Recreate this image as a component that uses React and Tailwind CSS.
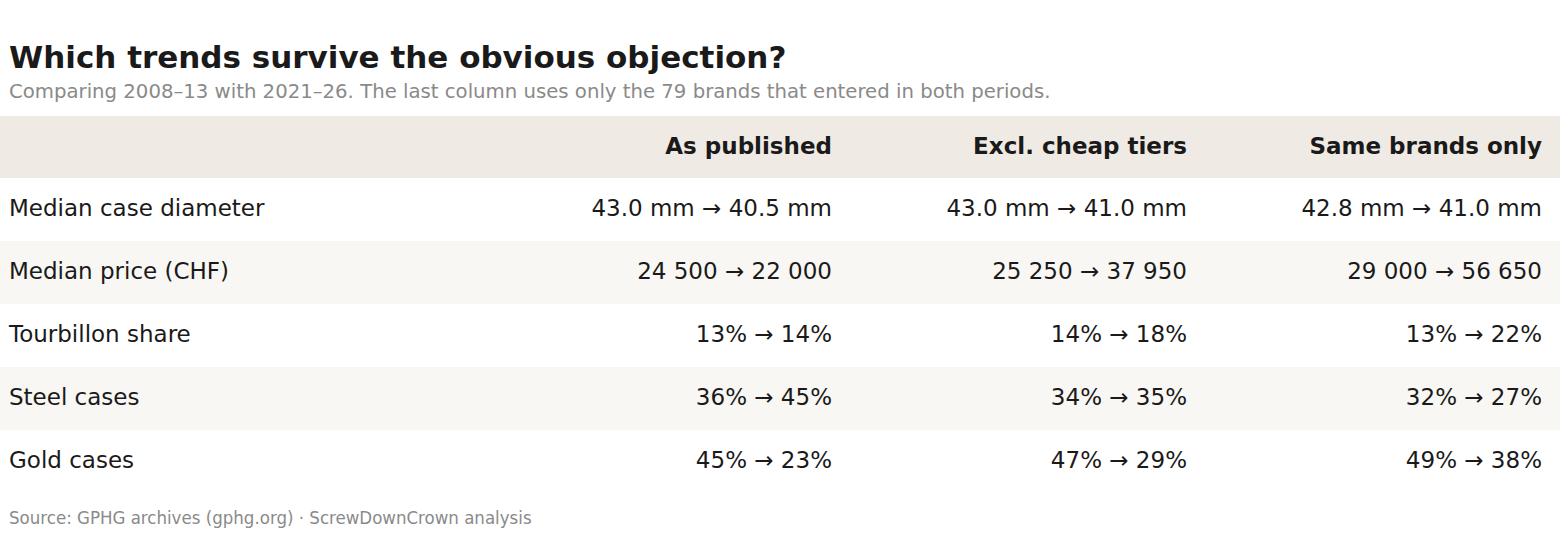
import React from 'react';

const rows = [
    { label: 'Median case diameter', a: '43.0 mm → 40.5 mm', b: '43.0 mm → 41.0 mm', c: '42.8 mm → 41.0 mm' },
    { label: 'Median price (CHF)', a: '24 500 → 22 000', b: '25 250 → 37 950', c: '29 000 → 56 650' },
    { label: 'Tourbillon share', a: '13% → 14%', b: '14% → 18%', c: '13% → 22%' },
    { label: 'Steel cases', a: '36% → 45%', b: '34% → 35%', c: '32% → 27%' },
    { label: 'Gold cases', a: '45% → 23%', b: '47% → 29%', c: '49% → 38%' },
];

const App = () => {
    return (
        <div className="w-[1560px] h-[552px] bg-white text-[#1a1a1a] font-['DejaVu_Sans',sans-serif]">
            <div className="pt-[38px] px-[9px]">
                <h1 className="text-[31px] leading-[38px] font-bold">Which trends survive the obvious objection?</h1>
                <p className="mt-[3px] text-[19.7px] leading-[26px] text-[#8a8a8a]">
                    Comparing 2008–13 with 2021–26. The last column uses only the 79 brands that entered in both periods.
                </p>
            </div>

            <table className="mt-[11px] w-full border-collapse">
                <thead>
                    <tr className="bg-[#efebe4] h-[62px] text-[23px]">
                        <th className="w-[495px] pb-[2px]"></th>
                        <th className="w-[355px] pr-[18px] pb-[2px] text-right font-bold">As published</th>
                        <th className="w-[355px] pr-[18px] pb-[2px] text-right font-bold">Excl. cheap tiers</th>
                        <th className="w-[355px] pr-[18px] pb-[2px] text-right font-bold">Same brands only</th>
                    </tr>
                </thead>
                <tbody>
                    {rows.map((row, i) => (
                        <tr key={row.label} className={`h-[63px] text-[23px] ${i % 2 === 1 ? 'bg-[#f8f7f3]' : 'bg-white'}`}>
                            <td className="pl-[9px] pb-[2px]">{row.label}</td>
                            <td className="pr-[18px] pb-[2px] text-right">{row.a}</td>
                            <td className="pr-[18px] pb-[2px] text-right">{row.b}</td>
                            <td className="pr-[18px] pb-[2px] text-right">{row.c}</td>
                        </tr>
                    ))}
                </tbody>
            </table>

            <p className="mt-[13px] px-[9px] text-[18.5px] leading-[24px] text-[#8a8a8a] font-['DejaVu_Sans_Condensed','DejaVu_Sans',sans-serif]">
                Source: GPHG archives (gphg.org) · ScrewDownCrown analysis
            </p>
        </div>
    );
};

export default App;
